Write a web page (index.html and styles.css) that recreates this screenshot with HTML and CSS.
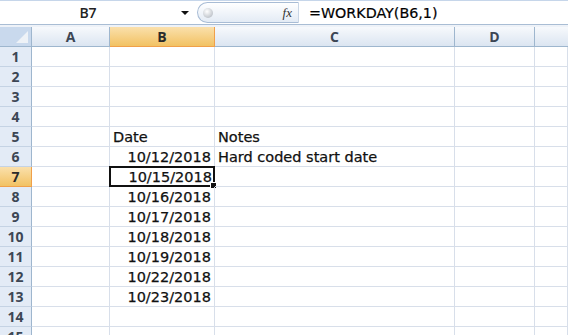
FILE: index.html
```html
<!DOCTYPE html>
<html>
<head>
  <title>WORKDAY</title>
  <link rel="stylesheet" href="styles.css">
</head>
<body>
  <div class="toolbar">
    <div class="name-box">B7</div>
    <div class="name-arrow"></div>
    <div class="fx-pill">
      <span class="fx-knob"></span>
      <span class="fx">fx</span>
    </div>
    <div class="formula">=WORKDAY(B6,1)</div>
  </div>
  <div class="strip"></div>

  <div class="sheet">
    <div class="corner"><span class="corner-tri"></span></div>
    <div class="col-head">A</div>
    <div class="col-head active">B</div>
    <div class="col-head">C</div>
    <div class="col-head">D</div>
    <div class="col-head last"></div>

    <div class="row-head">1</div><div class="cell"></div><div class="cell"></div><div class="cell"></div><div class="cell"></div><div class="cell"></div>
    <div class="row-head">2</div><div class="cell"></div><div class="cell"></div><div class="cell"></div><div class="cell"></div><div class="cell"></div>
    <div class="row-head">3</div><div class="cell"></div><div class="cell"></div><div class="cell"></div><div class="cell"></div><div class="cell"></div>
    <div class="row-head">4</div><div class="cell"></div><div class="cell"></div><div class="cell"></div><div class="cell"></div><div class="cell"></div>
    <div class="row-head">5</div><div class="cell"></div><div class="cell">Date</div><div class="cell">Notes</div><div class="cell"></div><div class="cell"></div>
    <div class="row-head">6</div><div class="cell"></div><div class="cell num">10/12/2018</div><div class="cell">Hard coded start date</div><div class="cell"></div><div class="cell"></div>
    <div class="row-head active">7</div><div class="cell"></div><div class="cell num selected">10/15/2018<span class="handle"></span></div><div class="cell"></div><div class="cell"></div><div class="cell"></div>
    <div class="row-head">8</div><div class="cell"></div><div class="cell num">10/16/2018</div><div class="cell"></div><div class="cell"></div><div class="cell"></div>
    <div class="row-head">9</div><div class="cell"></div><div class="cell num">10/17/2018</div><div class="cell"></div><div class="cell"></div><div class="cell"></div>
    <div class="row-head">10</div><div class="cell"></div><div class="cell num">10/18/2018</div><div class="cell"></div><div class="cell"></div><div class="cell"></div>
    <div class="row-head">11</div><div class="cell"></div><div class="cell num">10/19/2018</div><div class="cell"></div><div class="cell"></div><div class="cell"></div>
    <div class="row-head">12</div><div class="cell"></div><div class="cell num">10/22/2018</div><div class="cell"></div><div class="cell"></div><div class="cell"></div>
    <div class="row-head">13</div><div class="cell"></div><div class="cell num">10/23/2018</div><div class="cell"></div><div class="cell"></div><div class="cell"></div>
    <div class="row-head">14</div><div class="cell"></div><div class="cell"></div><div class="cell"></div><div class="cell"></div><div class="cell"></div>
    <div class="row-head">15</div><div class="cell"></div><div class="cell"></div><div class="cell"></div><div class="cell"></div><div class="cell"></div>
  </div>
</body>
</html>
```

FILE: styles.css
```css
body {
  margin: 0;
  font-family: "DejaVu Sans", Arial, sans-serif;
  background: #fff;
  overflow: hidden;
}

.toolbar {
  display: flex;
  align-items: center;
  height: 23px;
  border-top: 1px solid #c6d6ea;
  border-bottom: 1px solid #a9bdd4;
  background: #fff;
}
.name-box {
  width: 176px;
  text-align: center;
  font-family: "Open Sans", Arial, sans-serif;
  font-size: 14px;
  font-weight: 600;
  color: #222;
}
.name-arrow {
  width: 0;
  height: 0;
  margin-left: 5px;
  border-left: 4px solid transparent;
  border-right: 4px solid transparent;
  border-top: 4px solid #111;
}
.fx-pill {
  display: flex;
  align-items: center;
  justify-content: space-between;
  box-sizing: border-box;
  width: 102px;
  height: 21px;
  margin-left: 8px;
  padding: 0 6px 0 5px;
  border: 1px solid #a8bcd5;
  border-right-color: #c9d6e6;
  border-radius: 11px 0 0 11px;
  background: linear-gradient(#ffffff, #e3ebf5);
}
.fx-knob {
  width: 10px;
  height: 10px;
  border-radius: 50%;
  background: radial-gradient(circle at 40% 35%, #ffffff, #a9b0b9);
}
.fx {
  font-family: "Liberation Serif", serif;
  font-style: italic;
  font-size: 13px;
  color: #333;
}
.formula {
  padding-left: 10px;
  font-size: 14.3px;
  color: #000;
  -webkit-text-stroke: 0.2px #000;
}

.strip {
  height: 2px;
  background: #eef2f8;
}

.sheet {
  display: grid;
  grid-template-columns: 32px 78px 105px 240px 80px 1fr;
  grid-auto-rows: 20px;
}

.corner {
  position: relative;
  box-sizing: border-box;
  border-right: 1px solid #9eb6ce;
  border-bottom: 1px solid #9eb6ce;
  background: #c9d9ed;
}
.corner-tri {
  position: absolute;
  right: 3px;
  bottom: 3px;
  width: 0;
  height: 0;
  border-left: 12px solid transparent;
  border-bottom: 12px solid #eef2f7;
}

.col-head,
.row-head {
  display: flex;
  align-items: center;
  justify-content: center;
  box-sizing: border-box;
  font-family: "Open Sans", Arial, sans-serif;
  font-size: 14px;
  font-weight: 700;
  color: #3c4654;
}
.col-head {
  border-right: 1px solid #9eb6ce;
  border-bottom: 1px solid #9eb6ce;
  background: linear-gradient(#f7f9fc, #dbe5f1);
}
.col-head.last {
  border-right: none;
}
.row-head {
  border-right: 1px solid #9eb6ce;
  border-bottom: 1px solid #c5d3e4;
  background: #e3ebf6;
}
.col-head.active,
.row-head.active {
  background: linear-gradient(#fae0ac, #f2c263);
  border-color: #f0a04a;
  color: #2b2b2b;
}

.cell {
  position: relative;
  display: flex;
  align-items: center;
  box-sizing: border-box;
  padding: 0 3px;
  border-right: 1px solid #d8dfea;
  border-bottom: 1px solid #d8dfea;
  font-size: 14.5px;
  color: #111;
  -webkit-text-stroke: 0.25px #111;
  white-space: nowrap;
}
.cell.num {
  justify-content: flex-end;
}
.cell.selected {
  border: 2px solid #111;
  margin: -1px 0 0 -1px;
  padding-right: 1px;
}
.handle {
  position: absolute;
  right: -4px;
  bottom: -4px;
  width: 5px;
  height: 5px;
  background: #111;
  border: 1px solid #fff;
}
```
